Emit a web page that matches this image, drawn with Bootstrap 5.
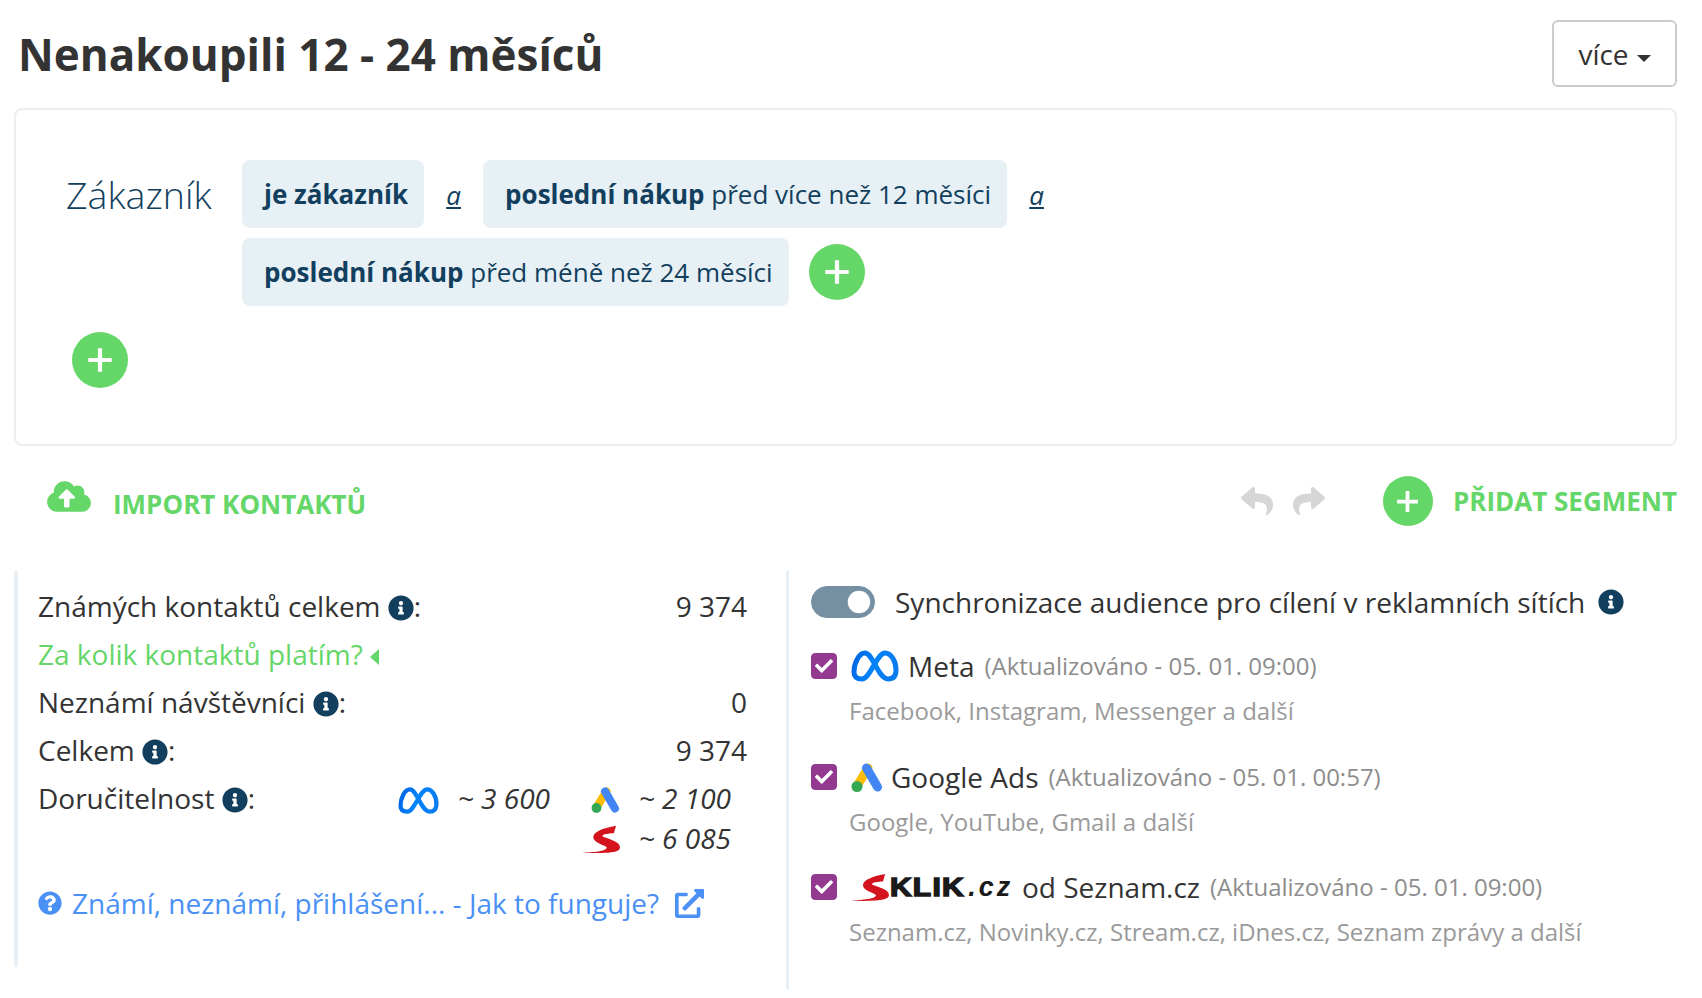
<!DOCTYPE html>
<html lang="cs">
<head>
  <meta charset="UTF-8">
  <title>Nenakoupili 12 - 24 měsíců</title>
  <link rel="stylesheet" href="https://cdn.jsdelivr.net/npm/bootstrap@5.3.3/dist/css/bootstrap.min.css">
  <script src="https://cdn.jsdelivr.net/npm/bootstrap@5.3.3/dist/js/bootstrap.bundle.min.js"></script>
  <style>
    body { font-family: "Open Sans", sans-serif; font-size: 28px; color: #333; background: #fff; overflow: hidden; }
    .page-wrap { padding: 0 25px 0 14px; }
    .page-head { height: 108px; padding-top: 20px; }
    .page-title { font-size: 44px; font-weight: 700; color: #333; margin: 7px 0 0 4px; line-height: 54px; }
    .more-btn { width: 125px; height: 67px; font-size: 28px; color: #333; border: 2px solid #ccc; border-radius: 6px; background: #fff; padding: 0; }
    .more-btn.dropdown-toggle::after { border-top-width: 7px; border-left-width: 7px; border-right-width: 7px; vertical-align: 3px; margin-left: 8px; }
    .filter-box { height: 338px; border: 2px solid #eeeeee; border-radius: 8px; padding: 50px 0 0 50px; }
    .filter-name { width: 176px; flex: none; font-size: 37.5px; font-weight: 300; line-height: 70px; color: #123f5e; }
    .cond-line { min-height: 68px; }
    .cond-line + .cond-line { margin-top: 10px; }
    .cond-pill { height: 68px; line-height: 68px; background: #e7f0f5; border-radius: 8px; padding: 0 16px 0 22px; color: #123f5e; font-size: 26px; white-space: nowrap; }
    .cond-and { width: 59px; text-align: center; font-style: italic; font-size: 26px; color: #123f5e; padding-top: 3px; }
    .plus-round { width: 56px; height: 56px; border-radius: 50%; background: #65d668; border: 0; padding: 0; color: #fff; flex: none; }
    .plus-round svg { display: block; margin: auto; width: 28px; height: 28px; }
    .plus-round.mid { width: 50px; height: 50px; margin-left: 58px; }
    .plus-round.mid svg { width: 25px; height: 25px; }
    .plus-next { margin-left: 20px; margin-top: 6px; }
    .plus-group { margin: 26px 0 0 6px; }
    .actions-row { height: 125px; padding-top: 30px; }
    .green-label { color: #65d668; font-weight: 700; font-size: 26px; text-decoration: none; white-space: nowrap; }
    .import-link { margin-left: 33px; }
    .import-text { padding-top: 9px; margin-left: 22px; }
    .ico-cloud { width: 44px; height: 35px; color: #65d668; margin-top: 3px; }
    .ico-hist { width: 32px; height: 32px; color: #d6d6d6; }
    .ico-hist + .ico-hist { margin-left: 20px; }
    .segment-link { margin-left: 20px; }
    .stats-col { width: 772px; flex: none; height: 396px; border-left: 4px solid #e8f0f6; padding: 11px 39px 0 20px; }
    .stat-line { height: 48px; line-height: 48px; }
    .ico-info { width: 26px; height: 26px; color: #123f5e; vertical-align: -4px; }
    .green-link { color: #65d668; text-decoration: none; }
    .ico-caret { width: 10px; height: 16px; color: #65d668; vertical-align: 0; }
    .reach-grid { display: grid; grid-template-columns: 41px 142px 39px auto; margin-right: 16px; font-style: italic; line-height: 40px; margin-top: 4px; }
    .reach-val { padding-left: 19px; white-space: nowrap; }
    .reach-meta { width: 41px; height: 29px; align-self: center; margin-top: 5px; }
    .reach-ads { width: 29px; height: 27px; align-self: center; justify-self: end; margin-top: 3px; }
    .reach-seznam { width: 39px; height: 27px; align-self: center; margin-top: 3px; }
    .howto { margin-top: 24px; color: #4a90f5; text-decoration: none; display: flex; align-items: center; }
    .ico-help { width: 24px; height: 24px; margin-right: 10px; }
    .ico-ext { width: 29px; height: 29px; margin-left: 16px; }
    .sync-col { flex: 1; height: 418px; border-left: 3px solid #e8f0f6; padding: 15px 0 0 22px; }
    .sync-head { height: 32px; line-height: 32px; }
    .sync-head .form-check-input { width: 64px; height: 32px; margin: 0 20px 0 0; background-color: #7690a3; border-color: #7690a3; }
    .sync-head .ico-info { margin-left: 13px; }
    .net-block { margin-top: 28px; }
    .net-block + .net-block { margin-top: 29.5px; }
    .net-row { height: 40px; line-height: 40px; white-space: nowrap; }
    .net-row .form-check-input { width: 26px; height: 26px; margin: 0 14px 0 0; background-color: #93398f; border-color: #93398f; border-radius: 4px; flex: none; background-size: 18px; background-image: url("data:image/svg+xml,%3csvg xmlns='http://www.w3.org/2000/svg' viewBox='0 0 512 512'%3e%3cpath fill='%23fff' d='M173.898 439.404l-166.4-166.4c-9.997-9.997-9.997-26.206 0-36.204l36.203-36.204c9.997-9.998 26.207-9.998 36.204 0L192 312.69 432.095 72.596c9.997-9.997 26.207-9.997 36.204 0l36.203 36.204c9.997 9.997 9.997 26.206 0 36.204l-294.4 294.401c-9.998 9.997-26.207 9.997-36.204-.001z'/%3e%3c/svg%3e"); }
    .net-time { color: #8d8d8d; font-size: 24px; margin-left: 10px; }
    .net-sub { color: #9a9a9a; font-size: 24px; margin: 9px 0 0 38px; line-height: 32px; }
    .logo-meta { width: 48px; height: 32px; margin-right: 9px; }
    .logo-ads { width: 32px; height: 30px; margin-right: 8px; }
    .logo-sklik { display: inline-flex; align-items: center; width: 162px; margin-right: 9px; color: #1a1a1a; }
    .logo-sklik svg { width: 38px; height: 27px; flex: none; }
    .sklik-word { display: inline-block; transform: scaleX(1.2); transform-origin: left center; font-family: "Liberation Sans", sans-serif; font-weight: 700; font-size: 25px; margin: 0 16px 0 1px; -webkit-text-stroke: 1.4px #1a1a1a; letter-spacing: 1px; }
    .sklik-tld { font-family: "Liberation Sans", sans-serif; font-weight: 700; font-style: italic; font-size: 27px; letter-spacing: 3px; }
  </style>
</head>
<body>
  <svg width="0" height="0" class="position-absolute">
    <defs>
      <symbol id="i-info" viewBox="0 0 512 512"><path fill="currentColor" d="M256 8C119.043 8 8 119.083 8 256c0 136.997 111.043 248 248 248s248-111.003 248-248C504 119.083 392.957 8 256 8zm0 110c23.196 0 42 18.804 42 42s-18.804 42-42 42-42-18.804-42-42 18.804-42 42-42zm56 254c0 6.627-5.373 12-12 12h-88c-6.627 0-12-5.373-12-12v-24c0-6.627 5.373-12 12-12h12v-64h-12c-6.627 0-12-5.373-12-12v-24c0-6.627 5.373-12 12-12h64c6.627 0 12 5.373 12 12v100h12c6.627 0 12 5.373 12 12v24z"/></symbol>
      <symbol id="i-plus" viewBox="0 0 24 24"><path fill="currentColor" d="M10.200 2h3.600v8.200H22v3.600h-8.200V22h-3.600v-8.200H2v-3.600h8.200z"/></symbol>
      <linearGradient id="meta-g" x1="0" y1="0" x2="1" y2="0.2"><stop offset="0" stop-color="#0064e1"/><stop offset="0.5" stop-color="#0082fb"/><stop offset="1" stop-color="#0a7cf0"/></linearGradient>
      <symbol id="i-meta" viewBox="0 0 48 32"><path fill="none" stroke="url(#meta-g)" stroke-width="5" stroke-linejoin="round" d="M3 22c0-9 5-19 11-19 8 0 13 26 23 26 5 0 8-3 8-9 0-9-5-17-11-17-8 0-15 26-23 26-5 0-8-2-8-7z"/></symbol>
      <symbol id="i-ads" viewBox="0 0 32 30">
        <path fill="none" stroke="#fbbc04" stroke-width="9" stroke-linecap="round" d="M17 6 6 24"/>
        <path fill="none" stroke="#4285f4" stroke-width="9" stroke-linecap="round" d="M15.500 6 26.500 25"/>
        <circle cx="6" cy="24.500" r="5.500" fill="#34a853"/>
      </symbol>
      <symbol id="i-swoosh" viewBox="0 0 38 26"><path fill="#d4141c" d="M34 0 32 7C27 7 21 8 21 9.500c0 2 17 4 17 11 0 4-6 5-14 5.500-8 .5-16 .5-24 0 8-.5 24-1 25-5 .5-2.500-13-4-13-10.500 0-5 10-9 23-11z"/></symbol>
    </defs>
  </svg>

  <div class="page-wrap">
    <div class="page-head d-flex justify-content-between align-items-start">
      <h1 class="page-title">Nenakoupili 12 - 24 měsíců</h1>
      <button type="button" class="btn more-btn dropdown-toggle">více</button>
    </div>

    <div class="filter-box">
      <div class="d-flex">
        <div class="filter-name">Zákazník</div>
        <div>
          <div class="cond-line d-flex">
            <div class="cond-pill"><b>je zákazník</b></div>
            <a href="#" class="cond-and align-self-center">a</a>
            <div class="cond-pill"><b>poslední nákup</b> před více než 12 měsíci</div>
            <a href="#" class="cond-and align-self-center">a</a>
          </div>
          <div class="cond-line d-flex">
            <div class="cond-pill"><b>poslední nákup</b> před méně než 24 měsíci</div>
            <button type="button" class="plus-round plus-next"><svg><use href="#i-plus"/></svg></button>
          </div>
        </div>
      </div>
      <button type="button" class="plus-round plus-group"><svg><use href="#i-plus"/></svg></button>
    </div>

    <div class="actions-row d-flex justify-content-between align-items-start">
      <a href="#" class="green-label import-link d-flex align-items-start">
        <svg class="ico-cloud" viewBox="0 0 640 512"><path fill="currentColor" d="M537.6 226.6c4.1-10.7 6.4-22.4 6.4-34.6 0-53-43-96-96-96-19.7 0-38.1 6-53.3 16.2C367 64.2 315.3 32 256 32c-88.4 0-160 71.6-160 160 0 2.7.1 5.4.2 8.1C40.2 219.8 0 273.2 0 336c0 79.5 64.5 144 144 144h368c70.7 0 128-57.3 128-128 0-61.9-44-113.6-102.4-125.4zM393.4 288H328v112c0 8.8-7.2 16-16 16h-48c-8.8 0-16-7.2-16-16V288h-65.4c-14.3 0-21.4-17.2-11.3-27.3l105.4-105.4c6.2-6.2 16.4-6.2 22.6 0l105.4 105.4c10.1 10.1 2.9 27.3-11.3 27.3z"/></svg>
        <span class="import-text">IMPORT KONTAKTŮ</span>
      </a>
      <div class="d-flex align-items-center">
        <svg class="ico-hist" viewBox="0 0 512 512"><path fill="currentColor" d="M8.309 189.836L184.313 37.851C199.719 24.546 224 35.347 224 56.015v80.053c160.629 1.839 288 34.032 288 186.258 0 61.441-39.581 122.309-83.333 154.132-13.653 9.931-33.111-2.533-28.077-18.631 45.344-145.012-21.507-183.51-176.59-185.742V360c0 20.7-24.3 31.453-39.687 18.164l-176.004-152c-11.071-9.562-11.086-26.753 0-36.328z"/></svg>
        <svg class="ico-hist" viewBox="0 0 512 512"><path fill="currentColor" d="M503.691 189.836L327.687 37.851C312.281 24.546 288 35.347 288 56.015v80.053C127.371 137.907 0 170.1 0 322.326c0 61.441 39.581 122.309 83.333 154.132 13.653 9.931 33.111-2.533 28.077-18.631C66.066 312.814 132.917 274.316 288 272.085V360c0 20.7 24.3 31.453 39.687 18.164l176.004-152c11.071-9.562 11.086-26.753 0-36.328z"/></svg>
        <button type="button" class="plus-round mid"><svg><use href="#i-plus"/></svg></button>
        <a href="#" class="green-label segment-link">PŘIDAT SEGMENT</a>
      </div>
    </div>

    <div class="d-flex align-items-start">
      <div class="stats-col">
        <div class="stat-line d-flex justify-content-between">
          <span>Známých kontaktů celkem <svg class="ico-info"><use href="#i-info"/></svg>:</span><span>9 374</span>
        </div>
        <div class="stat-line">
          <a href="#" class="green-link">Za kolik kontaktů platím? <svg class="ico-caret" viewBox="0 0 10 16"><path fill="currentColor" d="M9 0v16L0 8z"/></svg></a>
        </div>
        <div class="stat-line d-flex justify-content-between">
          <span>Neznámí návštěvníci <svg class="ico-info"><use href="#i-info"/></svg>:</span><span>0</span>
        </div>
        <div class="stat-line d-flex justify-content-between">
          <span>Celkem <svg class="ico-info"><use href="#i-info"/></svg>:</span><span>9 374</span>
        </div>
        <div class="d-flex justify-content-between align-items-start">
          <span class="stat-line">Doručitelnost <svg class="ico-info"><use href="#i-info"/></svg>:</span>
          <div class="reach-grid">
            <svg class="reach-meta"><use href="#i-meta"/></svg>
            <span class="reach-val">~ 3 600</span>
            <svg class="reach-ads"><use href="#i-ads"/></svg>
            <span class="reach-val">~ 2 100</span>
            <span></span><span></span>
            <svg class="reach-seznam"><use href="#i-swoosh"/></svg>
            <span class="reach-val">~ 6 085</span>
          </div>
        </div>
        <a href="#" class="howto">
          <svg class="ico-help" viewBox="0 0 512 512"><path fill="currentColor" d="M504 256c0 136.997-111.043 248-248 248S8 392.997 8 256C8 119.083 119.043 8 256 8s248 111.083 248 248zM262.655 90c-54.497 0-89.255 22.957-116.549 63.758-3.536 5.286-2.353 12.415 2.715 16.258l34.699 26.31c5.205 3.947 12.621 3.008 16.665-2.122 17.864-22.658 30.113-35.797 57.303-35.797 20.429 0 45.698 13.148 45.698 32.958 0 14.976-12.363 22.667-32.534 33.976C247.128 238.528 216 254.941 216 296v4c0 6.627 5.373 12 12 12h56c6.627 0 12-5.373 12-12v-1.333c0-28.462 83.186-29.647 83.186-106.667 0-58.002-60.165-102-116.531-102zM256 338c-25.365 0-46 20.635-46 46 0 25.364 20.635 46 46 46s46-20.636 46-46c0-25.365-20.635-46-46-46z"/></svg>
          Známí, neznámí, přihlášení... - Jak to funguje?
          <svg class="ico-ext" viewBox="0 0 512 512"><path fill="currentColor" d="M432,320H400a16,16,0,0,0-16,16V448H64V128H208a16,16,0,0,0,16-16V80a16,16,0,0,0-16-16H48A48,48,0,0,0,0,112V464a48,48,0,0,0,48,48H400a48,48,0,0,0,48-48V336A16,16,0,0,0,432,320ZM488,0h-128c-21.37,0-32.05,25.91-17,41l35.73,35.73L135,320.37a24,24,0,0,0,0,34L157.67,377a24,24,0,0,0,34,0L435.28,133.32,471,169c15,15,41,4.5,41-17V24A24,24,0,0,0,488,0Z"/></svg>
        </a>
      </div>

      <div class="sync-col">
        <div class="sync-head form-check form-switch d-flex align-items-center p-0">
          <input class="form-check-input" type="checkbox" role="switch" checked>
          <span>Synchronizace audience pro cílení v reklamních sítích</span>
          <svg class="ico-info"><use href="#i-info"/></svg>
        </div>

        <div class="net-block">
          <div class="net-row d-flex align-items-center">
            <input class="form-check-input" type="checkbox" checked>
            <svg class="logo-meta"><use href="#i-meta"/></svg>
            <span>Meta</span>
            <span class="net-time">(Aktualizováno - 05. 01. 09:00)</span>
          </div>
          <div class="net-sub">Facebook, Instagram, Messenger a další</div>
        </div>

        <div class="net-block">
          <div class="net-row d-flex align-items-center">
            <input class="form-check-input" type="checkbox" checked>
            <svg class="logo-ads"><use href="#i-ads"/></svg>
            <span>Google Ads</span>
            <span class="net-time">(Aktualizováno - 05. 01. 00:57)</span>
          </div>
          <div class="net-sub">Google, YouTube, Gmail a další</div>
        </div>

        <div class="net-block">
          <div class="net-row d-flex align-items-center">
            <input class="form-check-input" type="checkbox" checked>
            <span class="logo-sklik"><svg><use href="#i-swoosh"/></svg><span class="sklik-word">KLIK</span><span class="sklik-tld">.cz</span></span>
            <span>od Seznam.cz</span>
            <span class="net-time">(Aktualizováno - 05. 01. 09:00)</span>
          </div>
          <div class="net-sub">Seznam.cz, Novinky.cz, Stream.cz, iDnes.cz, Seznam zprávy a další</div>
        </div>
      </div>
    </div>
  </div>
</body>
</html>
